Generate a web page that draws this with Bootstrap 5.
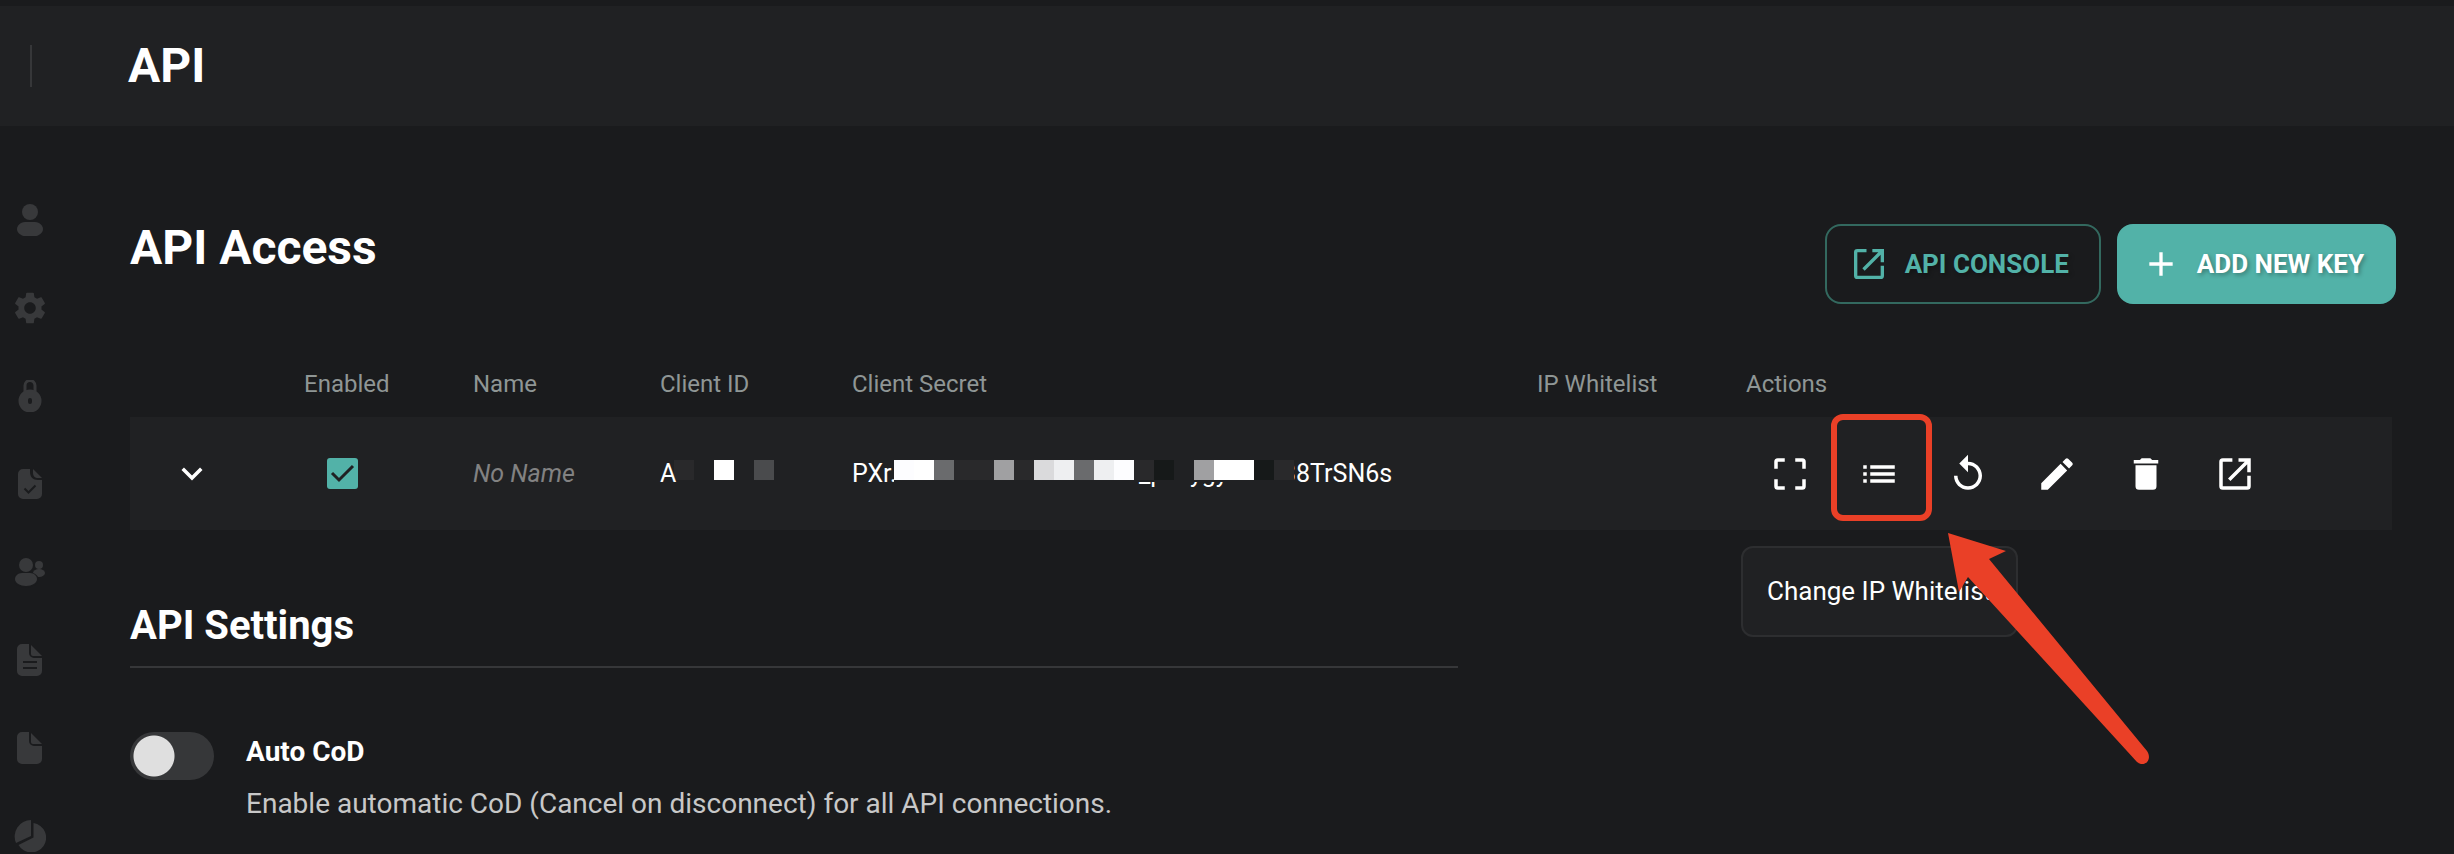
<!DOCTYPE html>
<html lang="en" data-bs-theme="dark">
<head>
<meta charset="utf-8">
<meta name="viewport" content="width=device-width, initial-scale=1">
<title>API</title>
<link href="https://cdn.jsdelivr.net/npm/bootstrap@5.3.0/dist/css/bootstrap.min.css" rel="stylesheet">
<style>
  :root { --page: #1a1b1d; --panel: #202123; --edge: #363739; --teal: #52b2a8; --alert: #ea4027; }
  body { background: var(--page); color: #fff; font-family: Roboto, "Liberation Sans", sans-serif; font-size: 24px; line-height: 36px; }
  svg { display: block; fill: currentColor; }
  .topbar { height: 126px; background: var(--panel); border-top: 6px solid #1a1b1d; padding-left: 30px; }
  .topbar-rule { width: 2px; height: 42px; background: var(--edge); }
  .page-title { font-size: 48px; line-height: 56px; font-weight: 700; margin: 0; }
  .topbar .page-title { margin-left: 96px; }
  .rail { width: 60px; padding-top: 78px; gap: 56px; color: #38393b; }
  .rail a { color: inherit; }
  .rail svg { width: 32px; height: 32px; }
  .content { padding: 94px 58px 0 70px; }
  .title-row { margin-bottom: 62px; }
  .key-btn { --bs-btn-border-radius: 16px; --bs-btn-border-width: 2px; height: 80px; margin-top: 4px; padding: 0 30px 0 22px; gap: 16px; font-size: 26px; font-weight: 700; text-shadow: 2px 2px 4px rgba(0,0,0,.3); }
  .key-btn svg { width: 40px; height: 40px; }
  .btn-console { --bs-btn-color: var(--teal); --bs-btn-border-color: #33695f; }
  .btn-new { --bs-btn-color: #fff; --bs-btn-bg: var(--teal); --bs-btn-border-color: var(--teal); }
  .keys { --bs-table-bg: transparent; table-layout: fixed; width: calc(100% - 4px); margin: 0; }
  .keys th, .keys td { padding: 0; border: 0; color: #fff; }
  .keys th { color: #8f9695; font-weight: 400; padding-bottom: 15px; }
  .keys td { background: var(--panel); height: 113px; font-size: 25px; }
  .keys .noname { color: #828282; font-style: italic; }
  .c-open { width: 174px; } .c-on { width: 169px; } .c-name { width: 187px; } .c-id { width: 192px; } .c-ip { width: 209px; } .c-act { width: 646px; }
  .icon-btn { background: none; border: 0; padding: 0; color: #fff; }
  .icon-btn svg { width: 42px; height: 42px; }
  .expander { margin-left: 41px; }
  .enable-box.form-check-input { width: 31px; height: 31px; margin: 0 0 0 23px; border: 0; border-radius: 3px; display: block; }
  .enable-box.form-check-input:checked { background-color: var(--teal); background-size: 31px 31px;
    background-image: url("data:image/svg+xml,%3Csvg xmlns='http://www.w3.org/2000/svg' viewBox='0 0 31 31'%3E%3Cpath fill='none' stroke='%23202123' stroke-width='3' d='M5 15l7 7L26 8'/%3E%3C/svg%3E"); }
  /* censored part of a value: a row of 20px tiles over the text */
  .mosaic { height: 20px; top: 4px; box-shadow: 0 2px var(--panel), 0 -2px var(--panel); background: var(--panel); }
  .mosaic i { width: 20px; height: 20px; }
  .id-mosaic { left: 14px; z-index: 0; }
  .id-letter { position: relative; z-index: 1; }
  .secret-mosaic { left: 42px; }
  .t0 { background: #fff } .t1 { background: #fdfdff } .t2 { background: #eeeff1 } .t3 { background: #dadadc } .t4 { background: #a0a0a2 }
  .t5 { background: #6a6b6d } .t6 { background: #4a4b4d } .t7 { background: #29292b } .t8 { background: #161919 }
  .secret-text span { display: inline-block; }
  .s-a { width: 287px; } .s-b { width: 51px; } .s-c { width: 92px; }
  .actions { gap: 47px; padding-left: 23px; }
  .spot { left: -27px; top: -39px; width: 101px; height: 107px; border: 6px solid var(--alert); border-radius: 12px; pointer-events: none; }
  .tip { left: -117px; top: 93px; height: 91px; padding: 0 24px; border: 2px solid #2d2e30; border-radius: 12px; background: var(--panel); font-size: 26px; }
  .icon-btn + .pointer, .pointer { left: 90px; top: 80px; width: 202px; height: 234px; color: var(--alert); pointer-events: none; }
  .settings { width: 1328px; max-width: 100%; margin-top: 71px; }
  .settings-title { font-size: 40px; line-height: 50px; font-weight: 700; margin: 0 0 64px; padding-bottom: 15px; border-bottom: 2px solid var(--edge); }
  .setting { gap: 32px; font-size: 28px; }
  .cod-switch.form-check-input { width: 84px; height: 48px; margin: 0; border: 0; border-radius: 24px; background-color: var(--edge); flex: none;
    background-image: radial-gradient(circle at 24px 24px, #dfdfdf 19px, #dfdfdf 20px, transparent 21px) !important; background-position: 0 0; background-size: 84px 48px; }
  .setting-text { padding-top: 2px; }
  .setting label { margin-bottom: 16px; }
  .setting p { color: #c8c8c8; margin: 0; }
</style>
</head>
<body>
<header class="topbar d-flex align-items-center">
  <div class="topbar-rule"></div>
  <h1 class="page-title">API</h1>
</header>
<div class="d-flex">
  <nav class="rail d-flex flex-column align-items-center flex-shrink-0" aria-label="Account">
    <a href="#" aria-label="Profile"><svg viewBox="0 0 32 32"><circle cx="16" cy="8" r="8"/><path d="M11 18h10c5 0 8 4 8 7 0 5-6 8-13 8S3 30 3 25c0-3 3-7 8-7z"/></svg></a>
    <a href="#" aria-label="Settings"><svg viewBox="2 2 20 20"><path d="M19.14 12.94c.04-.3.06-.61.06-.94 0-.32-.02-.64-.07-.94l2.03-1.58c.18-.14.23-.41.12-.61l-1.92-3.32c-.12-.22-.37-.29-.59-.22l-2.39.96c-.5-.38-1.03-.7-1.62-.94l-.36-2.54c-.04-.24-.24-.41-.48-.41h-3.84c-.24 0-.43.17-.47.41l-.36 2.54c-.59.24-1.13.57-1.62.94l-2.39-.96c-.22-.08-.47 0-.59.22L2.74 8.87c-.12.21-.08.47.12.61l2.03 1.58c-.05.3-.09.63-.09.94s.02.64.07.94l-2.03 1.58c-.18.14-.23.41-.12.61l1.92 3.32c.12.22.37.29.59.22l2.39-.96c.5.38 1.03.7 1.62.94l.36 2.54c.05.24.24.41.48.41h3.84c.24 0 .44-.17.47-.41l.36-2.54c.59-.24 1.13-.56 1.62-.94l2.39.96c.22.08.47 0 .59-.22l1.92-3.32c.12-.22.07-.47-.12-.61l-2.01-1.58zM12 15.6c-1.98 0-3.6-1.62-3.6-3.6s1.62-3.6 3.6-3.6 3.6 1.62 3.6 3.6-1.62 3.6-3.6 3.6z"/></svg></a>
    <a href="#" aria-label="Security"><svg viewBox="0 0 32 32"><path d="M11 14V5.500a5 5 0 0 1 10 0V14" fill="none" stroke="currentColor" stroke-width="3"/><path fill-rule="evenodd" d="M16 9.500a11.500 11.500 0 1 1 0 23 11.500 11.500 0 0 1 0-23zm0 8.500a2 2 0 0 0-2 2v2a2 2 0 0 0 4 0v-2a2 2 0 0 0-2-2z"/></svg></a>
    <a href="#" aria-label="Verification"><svg viewBox="0 0 32 32"><path d="M9 1h7v3c0 5 3 8 8 8h4v14a5 5 0 0 1-5 5H9a5 5 0 0 1-5-5V6a5 5 0 0 1 5-5z"/><path d="M19 1l9 9h-4c-3 0-5-2-5-5z"/><path d="M10.500 20.500l4 4 7-7" fill="none" stroke="#1a1b1d" stroke-width="2"/></svg></a>
    <a href="#" aria-label="Subaccounts"><svg viewBox="0 0 32 32"><circle cx="25" cy="9" r="4"/><ellipse cx="25" cy="17" rx="6" ry="4"/><ellipse cx="12" cy="23.500" rx="12.500" ry="8" fill="#1a1b1d"/><circle cx="12" cy="9" r="7"/><path d="M8 17h8c4 0 7 3 7 6 0 4-5 7-11 7S1 27 1 23c0-3 3-6 7-6z"/></svg></a>
    <a href="#" aria-label="Logs"><svg viewBox="0 0 32 32"><path d="M8 0h7v9a5 5 0 0 0 5 5h8v13a5 5 0 0 1-5 5H8a5 5 0 0 1-5-5V5a5 5 0 0 1 5-5z"/><path d="M17 1l11 11h-9a2 2 0 0 1-2-2z"/><path d="M9 18h14M9 24h14" stroke="#1a1b1d" stroke-width="2"/></svg></a>
    <a href="#" aria-label="Documents"><svg viewBox="0 0 32 32"><path d="M8 0h7v9a5 5 0 0 0 5 5h8v13a5 5 0 0 1-5 5H8a5 5 0 0 1-5-5V5a5 5 0 0 1 5-5z"/><path d="M17 1l11 11h-9a2 2 0 0 1-2-2z"/></svg></a>
    <a href="#" aria-label="Statistics"><svg viewBox="0 0 32 32"><path d="M17 0v16L2 23A16.500 16.500 0 0 1 17 0z"/><path d="M19.500 3A14.800 14.800 0 1 1 4.500 25l15-7.500z"/></svg></a>
  </nav>
  <main class="content flex-grow-1">
    <div class="title-row d-flex align-items-start justify-content-between">
      <h2 class="page-title">API Access</h2>
      <div class="d-flex gap-3">
        <button type="button" class="btn btn-console key-btn d-flex align-items-center"><svg viewBox="0 0 24 24"><path d="M19 19H5V5h5.500V3H5a2 2 0 0 0-2 2v14a2 2 0 0 0 2 2h14a2 2 0 0 0 2-2v-6h-2zM14 3v2h3.590L8 14.590 9.410 16 19 6.410V11h2V3z"/></svg>API CONSOLE</button>
        <button type="button" class="btn btn-new key-btn d-flex align-items-center"><svg viewBox="0 0 24 24"><path d="M19 13h-6v6h-2v-6H5v-2h6V5h2v6h6z"/></svg>ADD NEW KEY</button>
      </div>
    </div>
    <table class="table keys align-middle">
      <colgroup><col class="c-open"><col class="c-on"><col class="c-name"><col class="c-id"><col><col class="c-ip"><col class="c-act"></colgroup>
      <thead><tr><th></th><th scope="col" id="h-on">Enabled</th><th scope="col">Name</th><th scope="col">Client ID</th><th scope="col">Client Secret</th><th scope="col">IP Whitelist</th><th scope="col">Actions</th></tr></thead>
      <tbody><tr>
        <td><button type="button" class="icon-btn expander d-block" aria-label="Expand"><svg viewBox="0 0 24 24"><path d="M7.410 8.290L12 12.880l4.590-4.590L18 9.700l-6 6-6-6z"/></svg></button></td>
        <td><input class="form-check-input enable-box" type="checkbox" checked aria-labelledby="h-on"></td>
        <td class="noname">No Name</td>
        <td><div class="position-relative"><span class="id-letter">A</span><div class="mosaic id-mosaic position-absolute d-flex"><i class="t7"></i><i></i><i class="t0"></i><i></i><i class="t6"></i></div></div></td>
        <td><div class="secret-text position-relative text-nowrap"><span class="s-a">PXr.</span><span class="s-b">_p</span><span class="s-c">ygy</span><span>38TrSN6s</span><div class="mosaic secret-mosaic position-absolute d-flex"><i class="t1"></i><i class="t0"></i><i class="t5"></i><i class="t7"></i><i class="t7"></i><i class="t4"></i><i class="t7"></i><i class="t3"></i><i class="t2"></i><i class="t5"></i><i class="t2"></i><i class="t1"></i><i class="t7"></i><i class="t8"></i><i></i><i class="t4"></i><i class="t0"></i><i class="t0"></i><i class="t8"></i><i class="t7"></i></div></div></td>
        <td></td>
        <td><div class="actions d-flex align-items-center">
          <button type="button" class="icon-btn" aria-label="Scopes"><svg viewBox="0 0 24 24"><path d="M3 5v4h2V5h4V3H5a2 2 0 0 0-2 2zm2 10H3v4a2 2 0 0 0 2 2h4v-2H5zm14 4h-4v2h4a2 2 0 0 0 2-2v-4h-2zm0-16h-4v2h4v4h2V5a2 2 0 0 0-2-2z"/></svg></button>
          <div class="position-relative">
            <button type="button" class="icon-btn d-block" aria-describedby="tip-ip" aria-label="Change list"><svg viewBox="0 0 24 24"><path d="M3 13h2v-2H3zm0 4h2v-2H3zm0-8h2V7H3zm4 4h14v-2H7zm0 4h14v-2H7zM7 7v2h14V7z"/></svg></button>
            <div class="spot position-absolute"></div>
            <div id="tip-ip" role="tooltip" class="tip position-absolute d-flex align-items-center text-nowrap">Change IP Whitelist</div>
            <svg class="pointer position-absolute" viewBox="0 0 202 234" aria-hidden="true"><path d="M0 0l58 18-17 8 158 192c6 9-3 17-10 11L20 44l-9 15z"/></svg>
          </div>
          <button type="button" class="icon-btn" aria-label="Reset"><svg viewBox="0 0 24 24"><path d="M12 5V1L7 6l5 5V7c3.310 0 6 2.690 6 6s-2.690 6-6 6-6-2.690-6-6H4c0 4.420 3.580 8 8 8s8-3.580 8-8-3.580-8-8-8z"/></svg></button>
          <button type="button" class="icon-btn" aria-label="Edit"><svg viewBox="0 0 24 24"><path d="M3 17.250V21h3.750L17.810 9.940l-3.750-3.750zM20.710 7.040a1 1 0 0 0 0-1.410l-2.340-2.340a1 1 0 0 0-1.410 0l-1.830 1.830 3.750 3.750z"/></svg></button>
          <button type="button" class="icon-btn" aria-label="Delete"><svg viewBox="0 0 24 24"><path d="M6 19a2 2 0 0 0 2 2h8a2 2 0 0 0 2-2V7H6zM19 4h-3.500l-1-1h-5l-1 1H5v2h14z"/></svg></button>
          <button type="button" class="icon-btn" aria-label="Open"><svg viewBox="0 0 24 24"><path d="M19 19H5V5h5.500V3H5a2 2 0 0 0-2 2v14a2 2 0 0 0 2 2h14a2 2 0 0 0 2-2v-6h-2zM14 3v2h3.590L8 14.590 9.410 16 19 6.410V11h2V3z"/></svg></button>
        </div></td>
      </tr></tbody>
    </table>
    <section class="settings">
      <h3 class="settings-title">API Settings</h3>
      <div class="setting d-flex align-items-start">
        <input class="form-check-input cod-switch" type="checkbox" role="switch" id="cod">
        <div class="setting-text"><label for="cod" class="d-block fw-bold">Auto CoD</label><p>Enable automatic CoD (Cancel on disconnect) for all API connections.</p></div>
      </div>
    </section>
  </main>
</div>
<script src="https://cdn.jsdelivr.net/npm/bootstrap@5.3.0/dist/js/bootstrap.bundle.min.js"></script>
</body>
</html>
